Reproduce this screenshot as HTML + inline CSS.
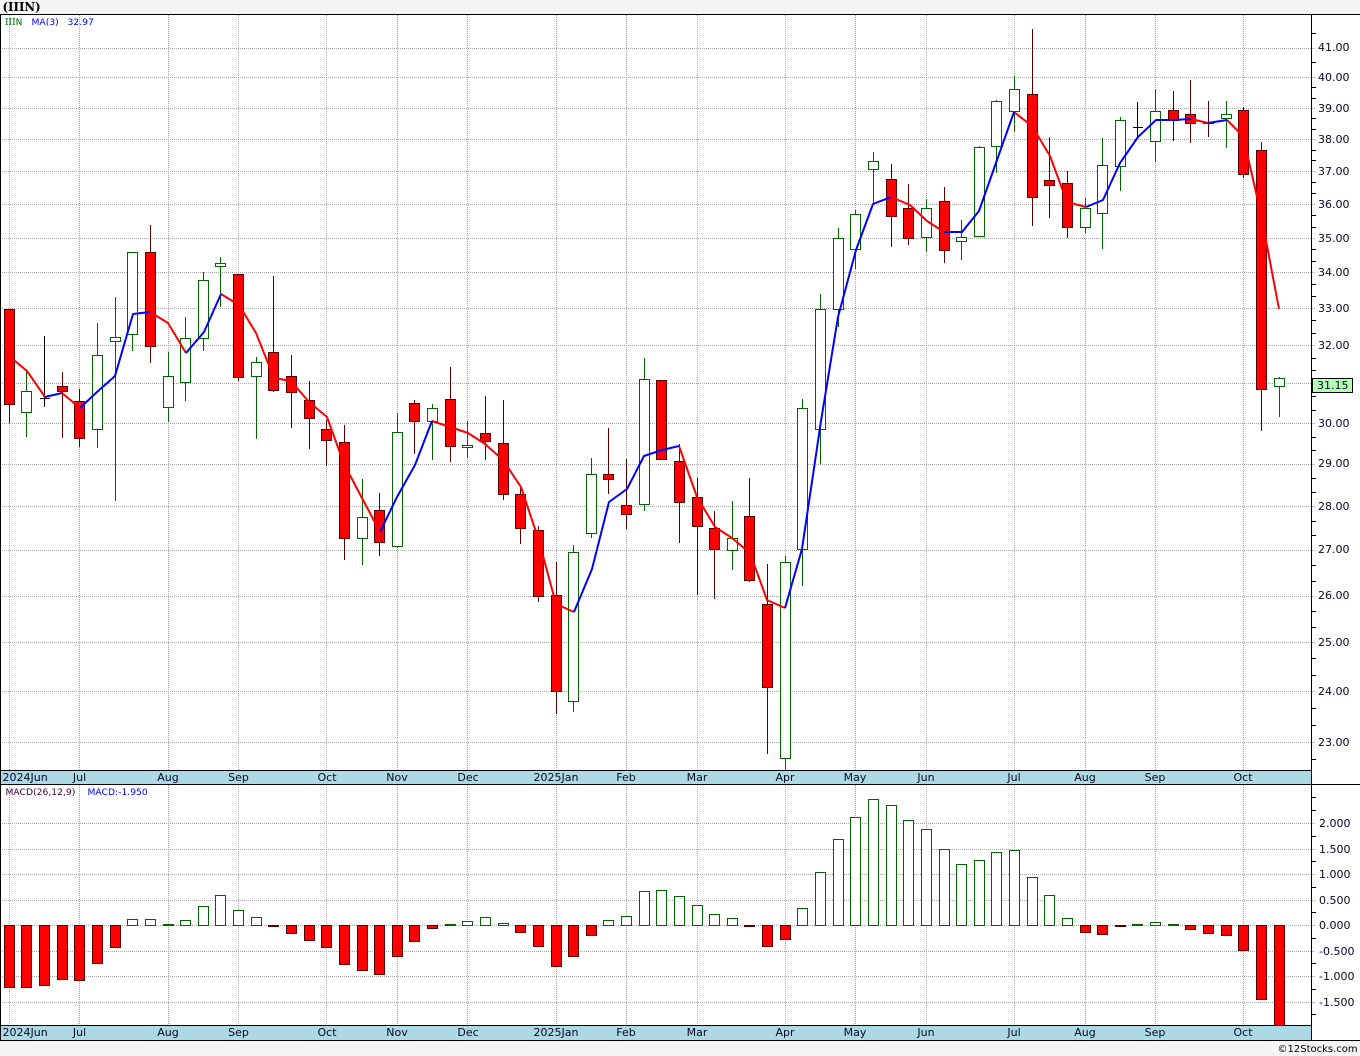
<!DOCTYPE html>
<html><head><meta charset="utf-8"><style>html,body{margin:0;padding:0;background:#f4f4f4;width:1360px;height:1056px;overflow:hidden}svg{display:block}text{font-family:"DejaVu Sans",sans-serif}</style></head><body>
<svg xmlns="http://www.w3.org/2000/svg" width="1360" height="1056" viewBox="0 0 1360 1056">
<rect width="1360" height="1056" fill="#f4f4f4"/>
<rect x="0" y="14" width="1360" height="1027" fill="#fff"/>
<g stroke="#a6a6a6" stroke-width="1" stroke-dasharray="1 1" fill="none" shape-rendering="crispEdges">
<path d="M0 48.5H1316M0 77.5H1316M0 108.5H1316M0 139.5H1316M0 171.5H1316M0 204.5H1316M0 238.5H1316M0 272.5H1316M0 308.5H1316M0 345.5H1316M0 383.5H1316M0 423.5H1316M0 464.5H1316M0 506.5H1316M0 550.5H1316M0 596.5H1316M0 642.5H1316M0 691.5H1316M0 742.5H1316"/>
<path d="M0 823.5H1316M0 849.5H1316M0 874.5H1316M0 900.5H1316M0 925.5H1316M0 951.5H1316M0 976.5H1316M0 1002.5H1316"/>
<path d="M9.5 15V770M79.5 15V770M168.5 15V770M238.5 15V770M326.5 15V770M397.5 15V770M467.5 15V770M556.5 15V770M626.5 15V770M697.5 15V770M785.5 15V770M855.5 15V770M926.5 15V770M1014.5 15V770M1085.5 15V770M1155.5 15V770M1243.5 15V770"/>
<path d="M9.5 785V1025M79.5 785V1025M168.5 785V1025M238.5 785V1025M326.5 785V1025M397.5 785V1025M467.5 785V1025M556.5 785V1025M626.5 785V1025M697.5 785V1025M785.5 785V1025M855.5 785V1025M926.5 785V1025M1014.5 785V1025M1085.5 785V1025M1155.5 785V1025M1243.5 785V1025"/>
</g>
<g shape-rendering="crispEdges" stroke-width="1" fill="none">
<path stroke="#006400" d="M26.5 370V437M97.5 323V448M115.5 297V501M132.5 252V351M168.5 352V422M185.5 317V401M203.5 272V351M220.5 257V307M256.5 357V439M362.5 479V565M397.5 413V548M432.5 404V460M467.5 421V458M573.5 545V712M591.5 458V538M644.5 358V511M732.5 501V570M785.5 556V770M802.5 399V586M820.5 294V464M838.5 228V327M855.5 210V269M873.5 152V204M926.5 199V252M961.5 220V260M979.5 146V237M996.5 100V173M1014.5 76V132M1085.5 198V233M1102.5 138V249M1120.5 117V191M1155.5 89V162M1226.5 101V148M1279.5 377V417"/>
<path stroke="#5a0000" d="M9.5 309V423M62.5 372V438M79.5 389V447M150.5 225V363M238.5 274V381M273.5 276V392M291.5 355V428M309.5 381V449M326.5 420V466M344.5 425V560M379.5 493V556M414.5 400V454M450.5 367V462M485.5 396V460M503.5 400V500M520.5 488V544M538.5 526V602M556.5 562V714M608.5 428V494M626.5 459V529M661.5 380V460M679.5 444V543M697.5 478V595M714.5 511V599M749.5 478V582M767.5 564V754M891.5 164V247M908.5 184V245M944.5 187V263M1032.5 29V226M1049.5 137V218M1067.5 171V238M1173.5 91V141M1190.5 80V143M1208.5 101V137M1243.5 107V178M1261.5 142V431"/>
<path stroke="#000" d="M44.5 336V407M40 398.5H50M1137.5 102V137M1133 127.5H1143"/>
</g>
<g shape-rendering="crispEdges" stroke="#006400" stroke-width="1" fill="#fff">
<rect x="21.5" y="391.5" width="10" height="21"/>
<rect x="92.5" y="355.5" width="10" height="74"/>
<rect x="110.5" y="337.5" width="10" height="4"/>
<rect x="127.5" y="252.5" width="10" height="82"/>
<rect x="163.5" y="376.5" width="10" height="31"/>
<rect x="180.5" y="338.5" width="10" height="44"/>
<rect x="198.5" y="280.5" width="10" height="58"/>
<rect x="215.5" y="263.5" width="10" height="3"/>
<rect x="251.5" y="362.5" width="10" height="14"/>
<rect x="357.5" y="517.5" width="10" height="21"/>
<rect x="392.5" y="432.5" width="10" height="114"/>
<rect x="427.5" y="408.5" width="10" height="13"/>
<rect x="462.5" y="445.5" width="10" height="2"/>
<rect x="568.5" y="552.5" width="10" height="149"/>
<rect x="586.5" y="474.5" width="10" height="59"/>
<rect x="639.5" y="379.5" width="10" height="125"/>
<rect x="727.5" y="538.5" width="10" height="12"/>
<rect x="780.5" y="562.5" width="10" height="196"/>
<rect x="797.5" y="408.5" width="10" height="141"/>
<rect x="815.5" y="309.5" width="10" height="120"/>
<rect x="833.5" y="238.5" width="10" height="71"/>
<rect x="850.5" y="214.5" width="10" height="35"/>
<rect x="868.5" y="161.5" width="10" height="8"/>
<rect x="921.5" y="208.5" width="10" height="29"/>
<rect x="956.5" y="237.5" width="10" height="4"/>
<rect x="974.5" y="147.5" width="10" height="89"/>
<rect x="991.5" y="101.5" width="10" height="45"/>
<rect x="1009.5" y="89.5" width="10" height="22"/>
<rect x="1080.5" y="208.5" width="10" height="19"/>
<rect x="1097.5" y="165.5" width="10" height="48"/>
<rect x="1115.5" y="120.5" width="10" height="46"/>
<rect x="1150.5" y="111.5" width="10" height="30"/>
<rect x="1221.5" y="114.5" width="10" height="4"/>
<rect x="1274.5" y="378.5" width="10" height="8"/>
</g>
<g shape-rendering="crispEdges" stroke="#5a0000" stroke-width="1" fill="#f00">
<rect x="4.5" y="309.5" width="10" height="95"/>
<rect x="57.5" y="386.5" width="10" height="5"/>
<rect x="74.5" y="401.5" width="10" height="37"/>
<rect x="145.5" y="252.5" width="10" height="94"/>
<rect x="233.5" y="274.5" width="10" height="103"/>
<rect x="268.5" y="352.5" width="10" height="38"/>
<rect x="286.5" y="376.5" width="10" height="16"/>
<rect x="304.5" y="400.5" width="10" height="18"/>
<rect x="321.5" y="429.5" width="10" height="11"/>
<rect x="339.5" y="442.5" width="10" height="96"/>
<rect x="374.5" y="510.5" width="10" height="32"/>
<rect x="409.5" y="403.5" width="10" height="18"/>
<rect x="445.5" y="399.5" width="10" height="47"/>
<rect x="480.5" y="433.5" width="10" height="8"/>
<rect x="498.5" y="443.5" width="10" height="51"/>
<rect x="515.5" y="494.5" width="10" height="34"/>
<rect x="533.5" y="530.5" width="10" height="66"/>
<rect x="551.5" y="595.5" width="10" height="96"/>
<rect x="603.5" y="474.5" width="10" height="5"/>
<rect x="621.5" y="505.5" width="10" height="9"/>
<rect x="656.5" y="380.5" width="10" height="79"/>
<rect x="674.5" y="461.5" width="10" height="41"/>
<rect x="692.5" y="497.5" width="10" height="29"/>
<rect x="709.5" y="528.5" width="10" height="21"/>
<rect x="744.5" y="516.5" width="10" height="64"/>
<rect x="762.5" y="604.5" width="10" height="83"/>
<rect x="886.5" y="179.5" width="10" height="37"/>
<rect x="903.5" y="208.5" width="10" height="30"/>
<rect x="939.5" y="201.5" width="10" height="49"/>
<rect x="1027.5" y="94.5" width="10" height="103"/>
<rect x="1044.5" y="180.5" width="10" height="5"/>
<rect x="1062.5" y="183.5" width="10" height="44"/>
<rect x="1168.5" y="110.5" width="10" height="10"/>
<rect x="1185.5" y="114.5" width="10" height="9"/>
<rect x="1203.5" y="122.5" width="10" height="1"/>
<rect x="1238.5" y="110.5" width="10" height="64"/>
<rect x="1256.5" y="150.5" width="10" height="239"/>
</g>
<g fill="none" stroke-width="2" stroke-linejoin="round">
<g stroke="#f00">
<polyline points="9,356 27,371 45,397"/>
<polyline points="62,393 80,408"/>
<polyline points="150,312 168,323 186,353"/>
<polyline points="221,294 239,305 256,333 274,378 291,381 309,402 327,417 344,464 362,498 380,532"/>
<polyline points="432,421 450,427 468,433 485,444 503,460 521,487 539,541 556,604 574,612"/>
<polyline points="679,446 697,497 715,527 732,538 750,553 767,600 785,608"/>
<polyline points="891,197 910,205 927,221 944,232"/>
<polyline points="1014,112 1032,126 1050,156 1067,202 1086,207"/>
<polyline points="1191,119 1208,123"/>
<polyline points="1227,120 1243,136 1261,214 1279,309"/>
</g>
<g stroke="#00f">
<polyline points="45,397 62,393"/>
<polyline points="80,408 97,392 115,376 133,314 150,312"/>
<polyline points="186,353 204,332 221,294"/>
<polyline points="380,532 397,497 415,465 432,421"/>
<polyline points="574,612 592,569 609,502 627,489 644,456 662,450 679,446"/>
<polyline points="785,608 802,549 821,421 838,317 856,250 873,204 891,197"/>
<polyline points="944,232 962,232 979,211 997,160 1014,112"/>
<polyline points="1086,207 1103,200 1120,163 1138,137 1156,120 1173,120 1191,119"/>
<polyline points="1208,123 1227,120"/>
</g>
</g>
<g shape-rendering="crispEdges" stroke="#006400" stroke-width="1" fill="#fff">
<rect x="127.5" y="919.5" width="10" height="6"/>
<rect x="145.5" y="919.5" width="10" height="6"/>
<rect x="163.5" y="924.5" width="10" height="1"/>
<rect x="180.5" y="920.5" width="10" height="5"/>
<rect x="198.5" y="906.5" width="10" height="19"/>
<rect x="215.5" y="895.5" width="10" height="30"/>
<rect x="233.5" y="910.5" width="10" height="15"/>
<rect x="251.5" y="917.5" width="10" height="8"/>
<rect x="445.5" y="924.5" width="10" height="1"/>
<rect x="462.5" y="921.5" width="10" height="4"/>
<rect x="480.5" y="917.5" width="10" height="8"/>
<rect x="498.5" y="923.5" width="10" height="2"/>
<rect x="603.5" y="920.5" width="10" height="5"/>
<rect x="621.5" y="916.5" width="10" height="9"/>
<rect x="639.5" y="891.5" width="10" height="34"/>
<rect x="656.5" y="890.5" width="10" height="35"/>
<rect x="674.5" y="896.5" width="10" height="29"/>
<rect x="692.5" y="905.5" width="10" height="20"/>
<rect x="709.5" y="914.5" width="10" height="11"/>
<rect x="727.5" y="918.5" width="10" height="7"/>
<rect x="797.5" y="908.5" width="10" height="17"/>
<rect x="815.5" y="872.5" width="10" height="53"/>
<rect x="833.5" y="839.5" width="10" height="86"/>
<rect x="850.5" y="817.5" width="10" height="108"/>
<rect x="868.5" y="799.5" width="10" height="126"/>
<rect x="886.5" y="805.5" width="10" height="120"/>
<rect x="903.5" y="820.5" width="10" height="105"/>
<rect x="921.5" y="829.5" width="10" height="96"/>
<rect x="939.5" y="849.5" width="10" height="76"/>
<rect x="956.5" y="864.5" width="10" height="61"/>
<rect x="974.5" y="860.5" width="10" height="65"/>
<rect x="991.5" y="852.5" width="10" height="73"/>
<rect x="1009.5" y="850.5" width="10" height="75"/>
<rect x="1027.5" y="877.5" width="10" height="48"/>
<rect x="1044.5" y="895.5" width="10" height="30"/>
<rect x="1062.5" y="918.5" width="10" height="7"/>
<rect x="1132.5" y="924.5" width="10" height="1"/>
<rect x="1150.5" y="922.5" width="10" height="3"/>
<rect x="1168.5" y="924.5" width="10" height="1"/>
</g>
<g shape-rendering="crispEdges" stroke="#5a0000" stroke-width="1" fill="#f00">
<rect x="4.5" y="925.5" width="10" height="62"/>
<rect x="21.5" y="925.5" width="10" height="62"/>
<rect x="39.5" y="925.5" width="10" height="60"/>
<rect x="57.5" y="925.5" width="10" height="54"/>
<rect x="74.5" y="925.5" width="10" height="55"/>
<rect x="92.5" y="925.5" width="10" height="38"/>
<rect x="110.5" y="925.5" width="10" height="22"/>
<rect x="268.5" y="925.5" width="10" height="1"/>
<rect x="286.5" y="925.5" width="10" height="8"/>
<rect x="304.5" y="925.5" width="10" height="15"/>
<rect x="321.5" y="925.5" width="10" height="22"/>
<rect x="339.5" y="925.5" width="10" height="39"/>
<rect x="357.5" y="925.5" width="10" height="45"/>
<rect x="374.5" y="925.5" width="10" height="49"/>
<rect x="392.5" y="925.5" width="10" height="31"/>
<rect x="409.5" y="925.5" width="10" height="16"/>
<rect x="427.5" y="925.5" width="10" height="3"/>
<rect x="515.5" y="925.5" width="10" height="7"/>
<rect x="533.5" y="925.5" width="10" height="21"/>
<rect x="551.5" y="925.5" width="10" height="41"/>
<rect x="568.5" y="925.5" width="10" height="31"/>
<rect x="586.5" y="925.5" width="10" height="10"/>
<rect x="744.5" y="925.5" width="10" height="1"/>
<rect x="762.5" y="925.5" width="10" height="21"/>
<rect x="780.5" y="925.5" width="10" height="14"/>
<rect x="1080.5" y="925.5" width="10" height="7"/>
<rect x="1097.5" y="925.5" width="10" height="9"/>
<rect x="1115.5" y="925.5" width="10" height="1"/>
<rect x="1185.5" y="925.5" width="10" height="4"/>
<rect x="1203.5" y="925.5" width="10" height="8"/>
<rect x="1221.5" y="925.5" width="10" height="10"/>
<rect x="1238.5" y="925.5" width="10" height="25"/>
<rect x="1256.5" y="925.5" width="10" height="74"/>
<rect x="1274.5" y="925.5" width="10" height="100"/>
</g>
<rect x="0" y="770" width="1312" height="15" fill="#add8e6"/>
<rect x="0" y="1025" width="1312" height="16" fill="#add8e6"/>
<g shape-rendering="crispEdges" stroke="#000" stroke-width="1" fill="none">
<path d="M0 14.5H1360M0.5 14V1041M1311.5 14V1041M0 770.5H1311M0 784.5H1360M0 1025.5H1311M0 1040.5H1360"/>
<path d="M1312 33.5H1316M1312 62.5H1316M1312 87.5H1316M1312 98.5H1316M1312 118.5H1316M1312 129.5H1316M1312 150.5H1316M1312 160.5H1316M1312 182.5H1316M1312 193.5H1316M1312 215.5H1316M1312 227.5H1316M1312 249.5H1316M1312 261.5H1316M1312 284.5H1316M1312 296.5H1316M1312 320.5H1316M1312 333.5H1316M1312 358.5H1316M1312 370.5H1316M1312 396.5H1316M1312 410.5H1316M1312 437.5H1316M1312 450.5H1316M1312 478.5H1316M1312 492.5H1316M1312 521.5H1316M1312 535.5H1316M1312 565.5H1316M1312 581.5H1316M1312 611.5H1316M1312 627.5H1316M1312 658.5H1316M1312 675.5H1316M1312 708.5H1316M1312 725.5H1316M1312 759.5H1316"/>
<path d="M1312 797.5H1316M1312 810.5H1316M1312 836.5H1316M1312 861.5H1316M1312 887.5H1316M1312 912.5H1316M1312 938.5H1316M1312 963.5H1316M1312 989.5H1316M1312 1014.5H1316"/>
</g>
<rect x="1312.5" y="378.5" width="40" height="14" fill="#b3ffb3" stroke="#000" shape-rendering="crispEdges"/>
<text x="2.5" y="11" font-size="11.7" font-weight="bold" style="font-family:'DejaVu Serif',serif" fill="#000">(IIIN)</text>
<text x="5" y="25" font-size="9" fill="#006400"><tspan style="font-family:'DejaVu Serif',serif">III</tspan>N</text>
<text x="31.5" y="25" font-size="9.2" fill="#00f">MA(3)</text>
<text x="67.5" y="25" font-size="9.2" fill="#00f">32.97</text>
<text x="5.5" y="795" font-size="9.2" fill="#400030">MACD(26,12,9)</text>
<text x="87.5" y="795" font-size="9.2" fill="#00f">MACD:-1.950</text>
<g font-size="11" fill="#08082a">
<text x="1318" y="51">41.00</text><text x="1318" y="81">40.00</text><text x="1318" y="112">39.00</text><text x="1318" y="143">38.00</text><text x="1318" y="175">37.00</text><text x="1318" y="208">36.00</text><text x="1318" y="242">35.00</text><text x="1318" y="276">34.00</text><text x="1318" y="312">33.00</text><text x="1318" y="349">32.00</text><text x="1317" y="389">31.15</text><text x="1318" y="427">30.00</text><text x="1318" y="467">29.00</text><text x="1318" y="510">28.00</text><text x="1318" y="553">27.00</text><text x="1318" y="599">26.00</text><text x="1318" y="646">25.00</text><text x="1318" y="695">24.00</text><text x="1318" y="746">23.00</text>
<text x="1319" y="827">2.000</text><text x="1319" y="853">1.500</text><text x="1319" y="878">1.000</text><text x="1319" y="904">0.500</text><text x="1319" y="929">0.000</text><text x="1319" y="955">-0.500</text><text x="1319" y="980">-1.000</text><text x="1319" y="1006">-1.500</text>
</g>
<g font-size="11" fill="#08082a" text-anchor="middle">
<text x="2.5" y="781" text-anchor="start">2024Jun</text><text x="79.5" y="781">Jul</text><text x="168" y="781">Aug</text><text x="238.5" y="781">Sep</text><text x="327" y="781">Oct</text><text x="397" y="781">Nov</text><text x="468" y="781">Dec</text><text x="556" y="781">2025Jan</text><text x="626" y="781">Feb</text><text x="697" y="781">Mar</text><text x="785" y="781">Apr</text><text x="855" y="781">May</text><text x="926" y="781">Jun</text><text x="1014" y="781">Jul</text><text x="1085" y="781">Aug</text><text x="1155" y="781">Sep</text><text x="1243" y="781">Oct</text>
<text x="2.5" y="1036" text-anchor="start">2024Jun</text><text x="79.5" y="1036">Jul</text><text x="168" y="1036">Aug</text><text x="238.5" y="1036">Sep</text><text x="327" y="1036">Oct</text><text x="397" y="1036">Nov</text><text x="468" y="1036">Dec</text><text x="556" y="1036">2025Jan</text><text x="626" y="1036">Feb</text><text x="697" y="1036">Mar</text><text x="785" y="1036">Apr</text><text x="855" y="1036">May</text><text x="926" y="1036">Jun</text><text x="1014" y="1036">Jul</text><text x="1085" y="1036">Aug</text><text x="1155" y="1036">Sep</text><text x="1243" y="1036">Oct</text>
</g>
<text x="1277.5" y="1052" font-size="10" fill="#000">©12Stocks.com</text>
</svg>
</body></html>
